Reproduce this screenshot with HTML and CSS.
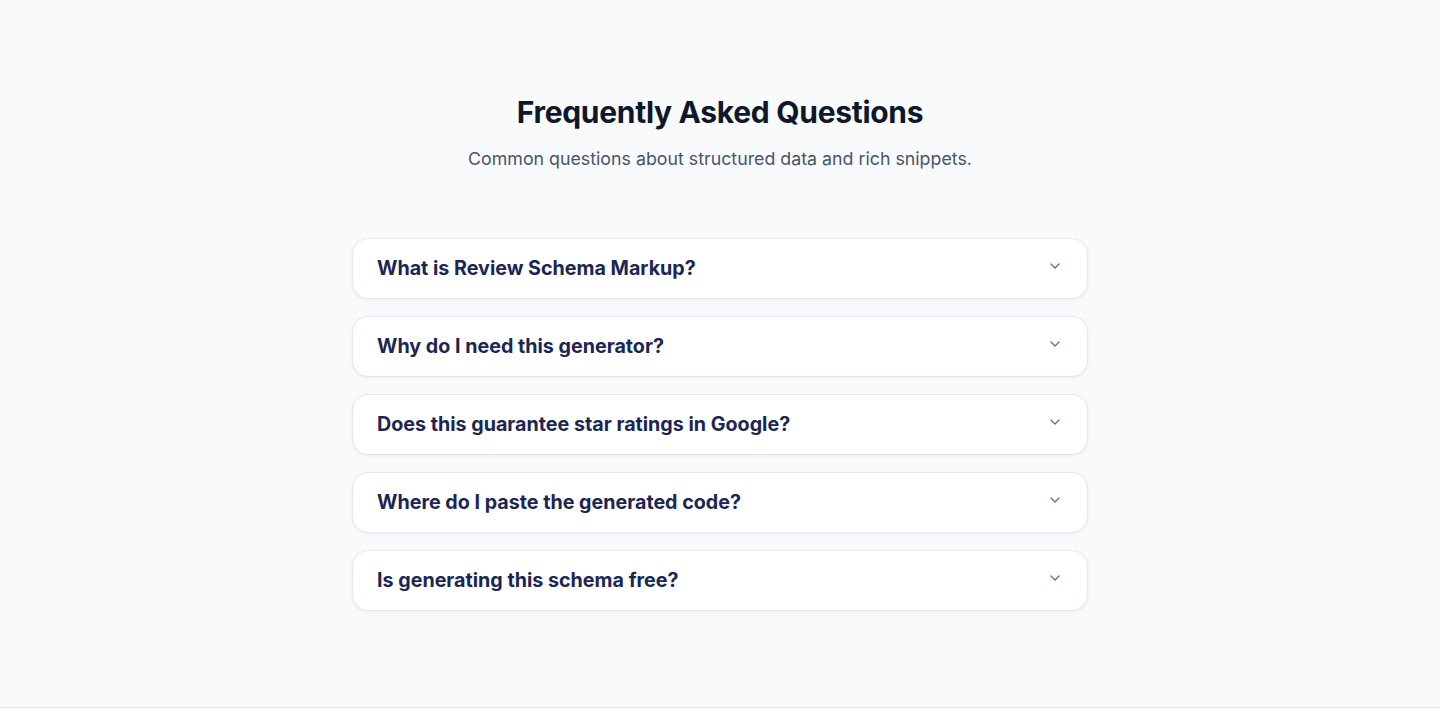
FILE: index.html
```html
<!DOCTYPE html>
<html lang="en">
<head>
  <meta charset="UTF-8" />
  <meta name="viewport" content="width=device-width, initial-scale=1" />
  <title>FAQ - Review Schema Generator</title>
  <link rel="stylesheet" href="styles.css">
</head>
<body>
  <section class="faq">
    <h2 class="faq-title">Frequently Asked Questions</h2>
    <p class="faq-subtitle">Common questions about structured data and rich snippets.</p>

    <div class="faq-list">
      <details class="faq-item">
        <summary>What is Review Schema Markup? <span class="chevron"><svg viewBox="0 0 24 24" width="16" height="16" fill="none" stroke="currentColor" stroke-width="2" stroke-linecap="round" stroke-linejoin="round"><path d="m6 9 6 6 6-6"/></svg></span></summary>
      </details>
      <details class="faq-item">
        <summary>Why do I need this generator? <span class="chevron"><svg viewBox="0 0 24 24" width="16" height="16" fill="none" stroke="currentColor" stroke-width="2" stroke-linecap="round" stroke-linejoin="round"><path d="m6 9 6 6 6-6"/></svg></span></summary>
      </details>
      <details class="faq-item">
        <summary>Does this guarantee star ratings in Google? <span class="chevron"><svg viewBox="0 0 24 24" width="16" height="16" fill="none" stroke="currentColor" stroke-width="2" stroke-linecap="round" stroke-linejoin="round"><path d="m6 9 6 6 6-6"/></svg></span></summary>
      </details>
      <details class="faq-item">
        <summary>Where do I paste the generated code? <span class="chevron"><svg viewBox="0 0 24 24" width="16" height="16" fill="none" stroke="currentColor" stroke-width="2" stroke-linecap="round" stroke-linejoin="round"><path d="m6 9 6 6 6-6"/></svg></span></summary>
      </details>
      <details class="faq-item">
        <summary>Is generating this schema free? <span class="chevron"><svg viewBox="0 0 24 24" width="16" height="16" fill="none" stroke="currentColor" stroke-width="2" stroke-linecap="round" stroke-linejoin="round"><path d="m6 9 6 6 6-6"/></svg></span></summary>
      </details>
    </div>
  </section>
  <footer class="site-footer"></footer>
</body>
</html>
```

FILE: styles.css
```css
body {
  font-family: Inter, 'Noto Sans', sans-serif;
  margin: 0;
  background: #f8fafc;
  color: #0f172a;
}

.faq {
  max-width: 736px;
  margin: 0 auto;
  padding: 94px 0 96px;
  text-align: center;
}

.faq-title {
  font-size: 30px;
  font-weight: 700;
  line-height: 36px;
  margin: 0 0 15px;
  color: #0f172a;
  letter-spacing: -0.3px;
}

.faq-subtitle {
  font-size: 17.8px;
  line-height: 28px;
  margin: 0 0 65px;
  color: #475569;
}

/* Accordion */
.faq-list {
  display: flex;
  flex-direction: column;
  gap: 17px;
  text-align: left;
}

.faq-item {
  background: #fff;
  border: 1px solid #e2e8f0;
  border-radius: 16px;
  box-shadow: 0 1px 3px rgba(15,23,42,0.06);
}

.faq-item summary {
  list-style: none;
  display: flex;
  justify-content: space-between;
  align-items: center;
  padding: 15px 24px 16px;
  font-size: 19.7px;
  font-weight: 700;
  line-height: 28px;
  color: #1b2652;
  cursor: pointer;
}
.faq-item summary::-webkit-details-marker {
  display: none;
}

.chevron {
  display: flex;
  color: #64748b;
  margin-top: -5px;
}

.site-footer {
  border-top: 1px solid #e2e8f0;
  height: 3px;
  background: #fff;
}
```
